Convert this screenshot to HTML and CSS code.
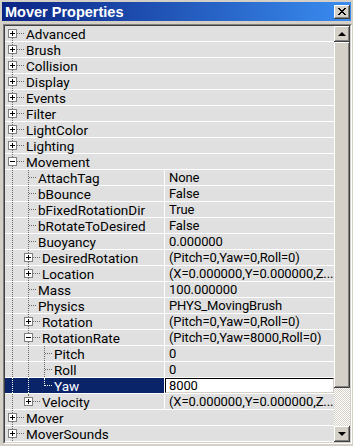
FILE: index.html
```html
<!DOCTYPE html>
<html>
<head>
  <meta charset="UTF-8">
  <title>Mover Properties</title>
  <link rel="stylesheet" href="styles.css">
</head>
<body>
  <div class="window">

    <!-- Title bar -->
    <div class="titlebar">
      <span class="title">Mover Properties</span>
      <span class="close">
        <svg width="8" height="7" viewBox="0 0 8 7" shape-rendering="crispEdges">
          <path d="M0 0.5h2M1 1.5h2M2 2.5h2M3 3.5h2M2 4.5h2M1 5.5h2M0 6.5h2M6 0.5h2M5 1.5h2M4 2.5h2M4 4.5h2M5 5.5h2M6 6.5h2" stroke="#000" stroke-width="1"/>
        </svg>
      </span>
    </div>

    <!-- Property list -->
    <div class="list">
      <div class="inner">
        <div class="tree">
          <div class="row cat"><div class="name"><span class="g f x"><i class="box plus"></i></span><span class="label">Advanced</span></div></div>
          <div class="row cat"><div class="name"><span class="g t x"><i class="box plus"></i></span><span class="label">Brush</span></div></div>
          <div class="row cat"><div class="name"><span class="g t x"><i class="box plus"></i></span><span class="label">Collision</span></div></div>
          <div class="row cat"><div class="name"><span class="g t x"><i class="box plus"></i></span><span class="label">Display</span></div></div>
          <div class="row cat"><div class="name"><span class="g t x"><i class="box plus"></i></span><span class="label">Events</span></div></div>
          <div class="row cat"><div class="name"><span class="g t x"><i class="box plus"></i></span><span class="label">Filter</span></div></div>
          <div class="row cat"><div class="name"><span class="g t x"><i class="box plus"></i></span><span class="label">LightColor</span></div></div>
          <div class="row cat"><div class="name"><span class="g t x"><i class="box plus"></i></span><span class="label">Lighting</span></div></div>
          <div class="row cat"><div class="name"><span class="g t x"><i class="box"></i></span><span class="label">Movement</span></div></div>

          <div class="row"><div class="name"><span class="g v"></span><span class="g t"></span><span class="label">AttachTag</span></div><div class="value">None</div></div>
          <div class="row"><div class="name"><span class="g v"></span><span class="g t"></span><span class="label">bBounce</span></div><div class="value">False</div></div>
          <div class="row"><div class="name"><span class="g v"></span><span class="g t"></span><span class="label">bFixedRotationDir</span></div><div class="value">True</div></div>
          <div class="row"><div class="name"><span class="g v"></span><span class="g t"></span><span class="label">bRotateToDesired</span></div><div class="value">False</div></div>
          <div class="row"><div class="name"><span class="g v"></span><span class="g t"></span><span class="label">Buoyancy</span></div><div class="value">0.000000</div></div>
          <div class="row"><div class="name"><span class="g v"></span><span class="g t x"><i class="box plus"></i></span><span class="label">DesiredRotation</span></div><div class="value">(Pitch=0,Yaw=0,Roll=0)</div></div>
          <div class="row"><div class="name"><span class="g v"></span><span class="g t x"><i class="box plus"></i></span><span class="label">Location</span></div><div class="value">(X=0.000000,Y=0.000000,Z...</div></div>
          <div class="row"><div class="name"><span class="g v"></span><span class="g t"></span><span class="label">Mass</span></div><div class="value">100.000000</div></div>
          <div class="row"><div class="name"><span class="g v"></span><span class="g t"></span><span class="label">Physics</span></div><div class="value">PHYS_MovingBrush</div></div>
          <div class="row"><div class="name"><span class="g v"></span><span class="g t x"><i class="box plus"></i></span><span class="label">Rotation</span></div><div class="value">(Pitch=0,Yaw=0,Roll=0)</div></div>
          <div class="row"><div class="name"><span class="g v"></span><span class="g t x"><i class="box"></i></span><span class="label">RotationRate</span></div><div class="value">(Pitch=0,Yaw=8000,Roll=0)</div></div>
          <div class="row"><div class="name"><span class="g v"></span><span class="g v"></span><span class="g t"></span><span class="label">Pitch</span></div><div class="value">0</div></div>
          <div class="row"><div class="name"><span class="g v"></span><span class="g v"></span><span class="g t"></span><span class="label">Roll</span></div><div class="value">0</div></div>
          <div class="row sel"><div class="name"><span class="g v"></span><span class="g v"></span><span class="g l"></span><span class="label">Yaw</span></div><div class="value"><div class="edit">8000</div></div></div>
          <div class="row"><div class="name"><span class="g v"></span><span class="g l x"><i class="box plus"></i></span><span class="label">Velocity</span></div><div class="value">(X=0.000000,Y=0.000000,Z...</div></div>

          <div class="row cat"><div class="name"><span class="g t x"><i class="box plus"></i></span><span class="label">Mover</span></div></div>
          <div class="row cat"><div class="name"><span class="g t x"><i class="box plus"></i></span><span class="label">MoverSounds</span></div></div>
        </div>

        <!-- Scrollbar -->
        <div class="scrollbar">
          <div class="sb-btn"><span class="arrow up"></span></div>
          <div class="sb-thumb"></div>
          <div class="sb-track"></div>
          <div class="sb-btn"><span class="arrow down"></span></div>
        </div>
      </div>
    </div>
  </div>
</body>
</html>
```

FILE: styles.css
```css
body {
  margin: 0;
  background: #d4d0c8;
  font-family: Roboto, "Liberation Sans", sans-serif;
  font-size: 13px;
  color: #000;
}

.window {
  width: 353px;
  height: 446px;
  box-sizing: border-box;
  padding: 2px;
}

/* title bar */
.titlebar {
  height: 19px;
  display: flex;
  align-items: center;
  justify-content: space-between;
  padding: 0 1px 0 3px;
  background: linear-gradient(to right, #0a2484, #3a8cf0);
  color: #fff;
}

.title {
  font-family: "Liberation Sans", Arial, sans-serif;
  font-weight: bold;
  font-size: 14.5px;
}

.close {
  width: 16px;
  height: 14px;
  display: flex;
  align-items: center;
  justify-content: center;
  background: #d4d0c8;
  box-shadow: inset -1px -1px #404040, inset 1px 1px #fff, inset -2px -2px #808080;
}

/* list box */
.list {
  margin: 3px 0 0 1px;
  width: 347px;
  border: 1px solid;
  border-color: #808080 #fff #fff #808080;
}

.inner {
  display: flex;
  border: 1px solid;
  border-color: #404040 #d4d0c8 #d4d0c8 #404040;
}

.tree {
  flex: 1;
  min-width: 0;
}

.row {
  display: flex;
  height: 15px;
  border-bottom: 1px solid #fff;
  background: #e0e0e0;
  white-space: nowrap;
}

.name {
  width: 159px;
  display: flex;
  border-right: 1px solid #fff;
}

.row.cat .name {
  flex: 1;
  border-right: 0;
}

.label,
.value {
  line-height: 14px;
  padding-top: 1px;
}

.value {
  flex: 1;
  padding-left: 4px;
  letter-spacing: -0.1px;
}

.label {
  padding-left: 1px;
  font-size: 13.5px;
}

.x + .label {
  padding-left: 5px;
}

/* tree guides */
.g {
  position: relative;
  flex: none;
  width: 16px;
  height: 15px;
}

.g::before {
  content: "";
  position: absolute;
  left: 7px;
  top: 0;
  bottom: 0;
  border-left: 1px dotted #6a6a6a;
}

.g::after {
  content: "";
  position: absolute;
  left: 8px;
  top: 7px;
  width: 7px;
  border-top: 1px dotted #6a6a6a;
}

.g.v::after {
  display: none;
}

.g.f::before {
  top: 7px;
}

.g.l::before {
  bottom: 7px;
}

.g.x::after {
  left: 11px;
  width: 8px;
}

.box {
  position: absolute;
  left: 3px;
  top: 3px;
  width: 7px;
  height: 7px;
  border: 1px solid #808080;
  background: #fff;
  z-index: 1;
}

.box::before {
  content: "";
  position: absolute;
  left: 1px;
  top: 3px;
  width: 5px;
  height: 1px;
  background: #000;
}

.box.plus::after {
  content: "";
  position: absolute;
  left: 3px;
  top: 1px;
  width: 1px;
  height: 5px;
  background: #000;
}

/* selected row */
.row.sel .name {
  background: #0a246a;
  color: #fff;
}

.row.sel .g::before,
.row.sel .g::after {
  border-color: #fff;
}

.row.sel .value {
  background: #fff;
  padding: 0;
}

.edit {
  height: 15px;
  box-sizing: border-box;
  border: 1px solid;
  border-color: #000 #d4d0c8 #d4d0c8 #000;
  padding-left: 3px;
  line-height: 14px;
}

/* scrollbar */
.scrollbar {
  width: 16px;
  display: flex;
  flex-direction: column;
}

.sb-btn,
.sb-thumb {
  background: #d4d0c8;
  box-shadow: inset -1px -1px #404040, inset 1px 1px #fff, inset -2px -2px #808080;
}

.sb-btn {
  height: 16px;
  display: flex;
  align-items: center;
  justify-content: center;
}

.sb-thumb {
  height: 346px;
}

.sb-track {
  flex: 1;
  background: repeating-conic-gradient(#fff 0 25%, #d4d0c8 0 50%) 0 0 / 2px 2px;
}

.arrow {
  width: 0;
  height: 0;
  border-left: 4px solid transparent;
  border-right: 4px solid transparent;
}

.arrow.up {
  border-bottom: 4px solid #000;
}

.arrow.down {
  border-top: 4px solid #000;
}
```
